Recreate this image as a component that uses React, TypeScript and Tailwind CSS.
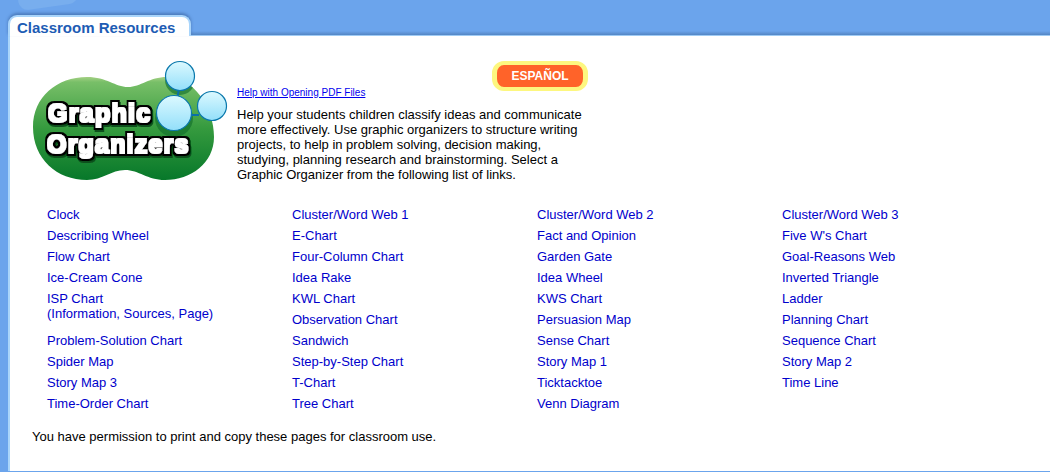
const columns = [
  [
    'Clock',
    'Describing Wheel',
    'Flow Chart',
    'Ice-Cream Cone',
    'ISP Chart|(Information, Sources, Page)',
    'Problem-Solution Chart',
    'Spider Map',
    'Story Map 3',
    'Time-Order Chart',
  ],
  [
    'Cluster/Word Web 1',
    'E-Chart',
    'Four-Column Chart',
    'Idea Rake',
    'KWL Chart',
    'Observation Chart',
    'Sandwich',
    'Step-by-Step Chart',
    'T-Chart',
    'Tree Chart',
  ],
  [
    'Cluster/Word Web 2',
    'Fact and Opinion',
    'Garden Gate',
    'Idea Wheel',
    'KWS Chart',
    'Persuasion Map',
    'Sense Chart',
    'Story Map 1',
    'Ticktacktoe',
    'Venn Diagram',
  ],
  [
    'Cluster/Word Web 3',
    "Five W's Chart",
    'Goal-Reasons Web',
    'Inverted Triangle',
    'Ladder',
    'Planning Chart',
    'Sequence Chart',
    'Story Map 2',
    'Time Line',
  ],
]

const BLOB =
  'M0 66 C0 36 24 16 54 16 C74 16 82 26 95 26 C108 26 116 16 134 16 C160 16 181 46 181 76 C181 102 158 119 132 119 C114 119 106 109 92 109 C78 109 70 119 54 119 C24 119 0 98 0 66 Z'

function Logo() {
  return (
    <svg width="195" height="125" viewBox="0 0 195 125" className="block overflow-visible">
      <defs>
        <linearGradient id="blob" x1="0" y1="0" x2="0" y2="1">
          <stop offset="0" stopColor="#a4d084" />
          <stop offset="0.05" stopColor="#78bf68" />
          <stop offset="0.5" stopColor="#359a3e" />
          <stop offset="1" stopColor="#07782a" />
        </linearGradient>
        <linearGradient id="bubble" x1="0" y1="0" x2="0" y2="1">
          <stop offset="0" stopColor="#dcf9ff" />
          <stop offset="1" stopColor="#93dffa" />
        </linearGradient>
        <clipPath id="blobClip">
          <path d={BLOB} />
        </clipPath>
        <filter id="outline" x="-10%" y="-30%" width="120%" height="160%">
          <feMorphology in="SourceGraphic" operator="dilate" radius="0.6" result="fat" />
          <feMorphology in="SourceAlpha" operator="dilate" radius="2.8" result="wide" />
          <feFlood floodColor="#000" result="black" />
          <feComposite in="black" in2="wide" operator="in" result="edge" />
          <feOffset in="edge" dx="1" dy="2" result="shift" />
          <feFlood floodColor="#0b4f1c" result="dark" />
          <feComposite in="dark" in2="shift" operator="in" result="shadow" />
          <feMerge>
            <feMergeNode in="shadow" />
            <feMergeNode in="edge" />
            <feMergeNode in="fat" />
          </feMerge>
        </filter>
      </defs>
      <path d={BLOB} fill="url(#blob)" />
      <g clipPath="url(#blobClip)" fill="#0f6b2a" opacity="0.6">
        <circle cx="147" cy="19" r="15" />
        <circle cx="141" cy="57" r="19" />
      </g>
      <path d="M146 28 L144 38 M158 54 L166 54" stroke="#0a6fa8" strokeWidth="2" fill="none" />
      <circle cx="147" cy="15" r="14.5" fill="url(#bubble)" stroke="#0a78ac" strokeWidth="1.2" />
      <circle cx="179" cy="45" r="14.5" fill="url(#bubble)" stroke="#0a78ac" strokeWidth="1.2" />
      <circle cx="141" cy="52" r="17.5" fill="url(#bubble)" stroke="#0a78ac" strokeWidth="1.2" />
      <g
        filter="url(#outline)"
        fontFamily="'Liberation Sans', sans-serif"
        fontWeight="700"
        fontSize="25"
        fill="#fff"
      >
        <text x="15" y="61" letterSpacing="1.3">
          Graphic
        </text>
        <text x="14" y="92" letterSpacing="1.2">
          Organizers
        </text>
      </g>
    </svg>
  )
}

export default function App() {
  return (
    <div className="relative h-[472px] w-[1050px] overflow-hidden bg-[#6ba4ec] font-['Liberation_Sans',Arial,sans-serif]">
      <div className="absolute left-[18px] top-[-12px] h-[19px] w-[60px] rotate-[-8deg] rounded-full bg-[#78aeee]" />
      <div className="relative flex h-[36px] items-end pl-[8px]">
        <div className="z-10 flex h-[21px] w-[183px] items-center rounded-t-[9px] border-x-2 border-t-2 border-b-0 border-[#a9d5fb] bg-white pl-[7px] pt-[4px] text-[15px] font-bold text-[#1d5cb4] shadow-[0_-2px_3px_rgba(50,90,150,0.55)]">
          Classroom Resources
        </div>
        <div className="h-[5px] flex-1 border-b border-[#9fcbf5] bg-gradient-to-b from-[#6ba4ec] to-[#5486c4]" />
      </div>
      <div className="ml-[8px] h-[435px] border-l-2 border-[#a9d5fb] bg-white">
        <div className="flex h-[166px] pt-[25px]">
          <div className="ml-[23px] w-[204px]">
            <Logo />
          </div>
          <div className="w-[351px]">
            <div className="flex items-end justify-between">
              <a href="#" className="mb-[-2px] block text-[10px] leading-[12px] text-[#0000ee] underline">
                Help with Opening PDF Files
              </a>
              <div className="mb-[6px] flex h-[30px] w-[96px] items-center justify-center rounded-[12px] border-x-[5px] border-y-[4px] border-[#fdf77f] bg-[#ff6329] text-[12px] font-bold text-white">
                ESPAÑOL
              </div>
            </div>
            <p className="mt-[10px] w-[346px] text-[13px] leading-[15px] text-black">
              Help your students children classify ideas and communicate more effectively. Use graphic organizers to
              structure writing projects, to help in problem solving, decision making, studying, planning research and
              brainstorming. Select a Graphic Organizer from the following list of links.
            </p>
          </div>
        </div>
        <div className="flex pl-[37px] pt-[2px]">
          {columns.map((col, i) => (
            <ul key={i} className="w-[245px]">
              {col.map((item) => {
                const lines = item.split('|')
                return (
                  <li key={item} className={lines.length > 1 ? 'h-[42px]' : 'h-[21px]'}>
                    <a href="#" className="block pt-[3px] text-[13px] leading-[15px] text-[#0000cc]">
                      {lines.map((l) => (
                        <span key={l} className="block">
                          {l}
                        </span>
                      ))}
                    </a>
                  </li>
                )
              })}
            </ul>
          ))}
        </div>
        <p className="ml-[22px] mt-[15px] text-[13px] leading-[15px] text-black">
          You have permission to print and copy these pages for classroom use.
        </p>
      </div>
    </div>
  )
}
